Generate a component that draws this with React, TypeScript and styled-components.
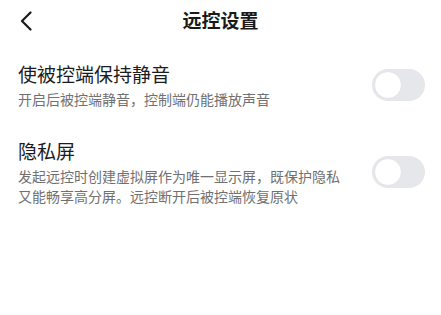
import React from "react";
import styled, { createGlobalStyle } from "styled-components";

const Global = createGlobalStyle`
  html, body { margin: 0; padding: 0; background: #ffffff; }
  body { font-family: "Noto Sans CJK SC", "Noto Sans", sans-serif; }
`;

const Page = styled.div`
  width: 441px;
  min-height: 315px;
  background: #ffffff;
  display: flex;
  flex-direction: column;
`;

const Header = styled.header`
  position: relative;
  height: 40px;
  display: flex;
  align-items: center;
  justify-content: center;
`;

const BackButton = styled.button`
  position: absolute;
  left: 14px;
  top: 8px;
  width: 24px;
  height: 26px;
  padding: 0;
  border: none;
  background: transparent;
  display: flex;
  align-items: center;
  justify-content: center;
`;

const HeaderTitle = styled.h1`
  margin: 0;
  font-size: 19px;
  line-height: 26px;
  font-weight: 600;
  color: #1a1a1a;
`;

const List = styled.div`
  display: flex;
  flex-direction: column;
  gap: 29px;
  padding: 21px 16px 0 18px;
`;

const Row = styled.div`
  display: flex;
  align-items: center;
  gap: 24px;
`;

const TextCol = styled.div`
  flex: 1;
  display: flex;
  flex-direction: column;
  gap: 2px;
`;

const Title = styled.div`
  font-size: 19px;
  line-height: 26px;
  color: #1c1c1e;
`;

const Desc = styled.div`
  font-size: 14px;
  line-height: 20px;
  color: #707070;
`;

const Track = styled.div<{ $on?: boolean }>`
  width: 53px;
  height: 32px;
  border-radius: 16px;
  background: ${(p) => (p.$on ? "#2f7bff" : "#e6e7eb")};
  flex-shrink: 0;
  display: flex;
  align-items: center;
  padding: 2px;
  box-sizing: border-box;
`;

const Knob = styled.div`
  width: 28px;
  height: 28px;
  border-radius: 50%;
  background: #ffffff;
  box-sizing: border-box;
  border: 1.5px solid #e3e4e7;
`;

const Toggle = ({ on }: { on?: boolean }) => (
  <Track $on={on}>
    <Knob />
  </Track>
);

export default function App() {
  return (
    <Page>
      <Global />
      <Header>
        <BackButton aria-label="返回">
          <svg width="12" height="20" viewBox="0 0 12 20">
            <path d="M10.5 1.5 L2 10 L10.5 18.5" fill="none" stroke="#1a1a1a" strokeWidth="2.2" strokeLinecap="round" strokeLinejoin="round" />
          </svg>
        </BackButton>
        <HeaderTitle>远控设置</HeaderTitle>
      </Header>
      <List>
        <Row>
          <TextCol>
            <Title>使被控端保持静音</Title>
            <Desc>开启后被控端静音，控制端仍能播放声音</Desc>
          </TextCol>
          <Toggle />
        </Row>
        <Row>
          <TextCol>
            <Title>隐私屏</Title>
            <Desc>发起远控时创建虚拟屏作为唯一显示屏，既保护隐私又能畅享高分屏。远控断开后被控端恢复原状</Desc>
          </TextCol>
          <Toggle />
        </Row>
      </List>
    </Page>
  );
}
